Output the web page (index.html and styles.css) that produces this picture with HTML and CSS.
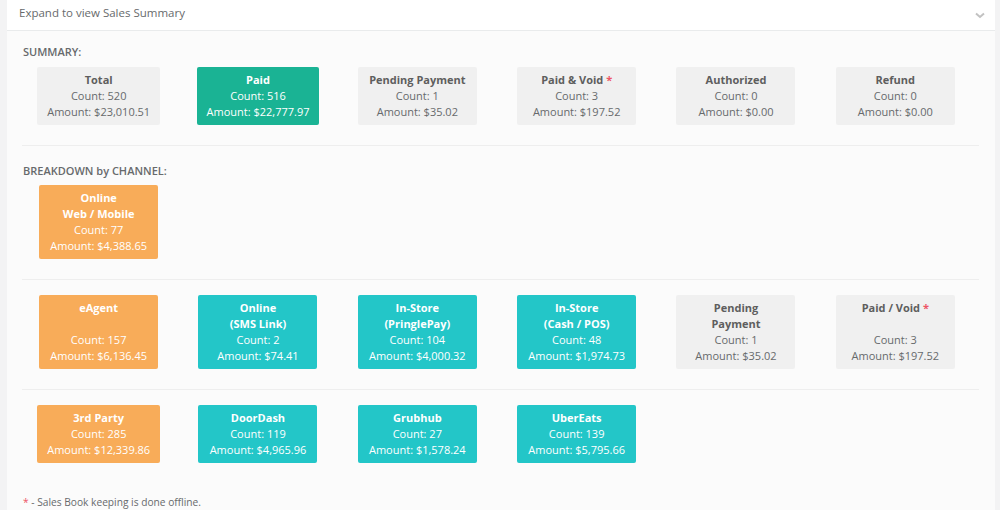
FILE: index.html
```html
<!DOCTYPE html>
<html>
<head>
<meta charset="utf-8">
<link rel="stylesheet" href="styles.css">
</head>
<body>
<div class="page">
  <div class="gutter"></div>
  <div class="panel">
    <div class="panel-head">
      <span>Expand to view Sales Summary</span>
      <svg class="chev" width="10" height="7" viewBox="0 0 10 7"><polyline points="1,1.5 5,5 9,1.5" fill="none" stroke="#c2c2c2" stroke-width="2"/></svg>
    </div>
    <div class="panel-body">
      <div class="label first">SUMMARY:</div>
      <div class="grid">
        <div class="cell"><div class="card gray"><b>Total</b>Count: 520<br>Amount: $23,010.51</div></div>
        <div class="cell"><div class="card green"><b>Paid</b>Count: 516<br>Amount: $22,777.97</div></div>
        <div class="cell"><div class="card gray"><b>Pending Payment</b>Count: 1<br>Amount: $35.02</div></div>
        <div class="cell"><div class="card gray"><b>Paid &amp; Void <span class="req">*</span></b>Count: 3<br>Amount: $197.52</div></div>
        <div class="cell"><div class="card gray"><b>Authorized</b>Count: 0<br>Amount: $0.00</div></div>
        <div class="cell"><div class="card gray"><b>Refund</b>Count: 0<br>Amount: $0.00</div></div>
      </div>
      <hr class="div">
      <div class="label second">BREAKDOWN by CHANNEL:</div>
      <div class="grid">
        <div class="cell"><div class="card orange"><b>Online<br>Web / Mobile</b>Count: 77<br>Amount: $4,388.65</div></div>
      </div>
      <hr class="div">
      <div class="grid spaced">
        <div class="cell"><div class="card orange"><b>eAgent<br>&nbsp;</b>Count: 157<br>Amount: $6,136.45</div></div>
        <div class="cell"><div class="card teal"><b>Online<br>(SMS Link)</b>Count: 2<br>Amount: $74.41</div></div>
        <div class="cell"><div class="card teal"><b>In-Store<br>(PringlePay)</b>Count: 104<br>Amount: $4,000.32</div></div>
        <div class="cell"><div class="card teal"><b>In-Store<br>(Cash / POS)</b>Count: 48<br>Amount: $1,974.73</div></div>
        <div class="cell"><div class="card gray"><b>Pending<br>Payment</b>Count: 1<br>Amount: $35.02</div></div>
        <div class="cell"><div class="card gray"><b>Paid / Void <span class="req">*</span><br>&nbsp;</b>Count: 3<br>Amount: $197.52</div></div>
      </div>
      <hr class="div">
      <div class="grid spaced">
        <div class="cell"><div class="card orange"><b>3rd Party</b>Count: 285<br>Amount: $12,339.86</div></div>
        <div class="cell"><div class="card teal"><b>DoorDash</b>Count: 119<br>Amount: $4,965.96</div></div>
        <div class="cell"><div class="card teal"><b>Grubhub</b>Count: 27<br>Amount: $1,578.24</div></div>
        <div class="cell"><div class="card teal"><b>UberEats</b>Count: 139<br>Amount: $5,795.66</div></div>
      </div>
      <div class="foot"><span class="req">*</span> - Sales Book keeping is done offline.</div>
    </div>
  </div>
  <div class="rstrip"></div>
</div>
</body>
</html>
```
FILE: styles.css
```css
html, body {
  margin: 0;
  padding: 0;
  background: #f3f3f4;
  font-family: "Open Sans", "Liberation Sans", sans-serif;
  font-size: 11px;
  line-height: 16px;
  color: #676a6c;
}
.page {
  display: flex;
  width: 1000px;
  height: 510px;
  overflow: hidden;
}
.gutter {
  width: 7px;
  flex: none;
  background: #f3f3f4;
}
.rstrip {
  width: 5px;
  flex: none;
  background: #f3f3f4;
}
.panel {
  width: 988px;
  flex: none;
  background: #fbfbfb;
}
.panel-head {
  height: 31px;
  box-sizing: border-box;
  background: #fff;
  border-bottom: 1px solid #e9ebec;
  display: flex;
  align-items: center;
  justify-content: space-between;
  padding: 0 10px 4px 12px;
  font-size: 11.5px;
}
.chev {
  margin-top: 4px;
}
.panel-body {
  padding: 13px 20px 0 12px;
}
.label {
  font-weight: 600;
  padding-left: 4px;
  color: #676a6c;
}
.label.first { margin-bottom: 7px; }
.label.second { margin-top: 17px; margin-bottom: 6px; }
.grid {
  display: grid;
  grid-template-columns: repeat(6, 1fr);
  width: 956px;
}
.grid.spaced { margin-top: 15px; }
.cell {
  display: flex;
  justify-content: center;
}
.card {
  min-width: 119px;
  box-sizing: border-box;
  padding: 5px 10px;
  text-align: center;
  border-radius: 2px;
  white-space: nowrap;
}
.card b {
  display: block;
  font-weight: 700;
}
.gray { background: #f0f0f0; color: #676a6c; }
.gray b { color: #5e5e5e; }
.green { background: #1ab394; color: #fff; }
.orange { background: #f8ac59; color: #fff; }
.teal { background: #23c6c8; color: #fff; }
.req { color: #ed5565; }
.div {
  border: 0;
  border-top: 1px solid #eeeeee;
  margin: 20px -4px 0 3px;
  height: 0;
}
.foot {
  margin-top: 31px;
  padding-left: 4px;
  font-size: 10.2px;
}
```
